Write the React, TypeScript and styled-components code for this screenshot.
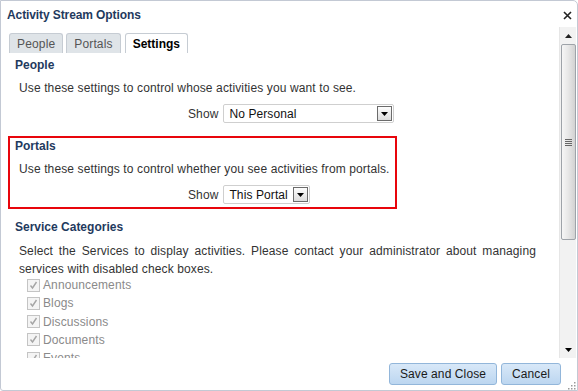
import React from "react";
import styled, { createGlobalStyle } from "styled-components";

const Global = createGlobalStyle`
  html, body { margin: 0; padding: 0; background: #ffffff; }
  body { font-family: "Liberation Sans", Arial, sans-serif; font-size: 12px; color: #333; }
  * { box-sizing: border-box; }
`;

const Dialog = styled.div`
  width: 578px;
  height: 391px;
  border: 1px solid #c3c9d4;
  border-top-right-radius: 5px;
  border-bottom-left-radius: 3px;
  background: #fff;
  display: flex;
  flex-direction: column;
  overflow: hidden;
`;

const Header = styled.div`
  height: 26px;
  display: flex;
  align-items: flex-start;
  justify-content: space-between;
  padding: 7px 5px 0 6px;
`;

const Title = styled.div`
  font-weight: bold;
  font-size: 12px;
  line-height: 15px;
  color: #1f3a5e;
  letter-spacing: -0.1px;
`;

const CloseBtn = styled.div`
  width: 10px;
  height: 10px;
  margin-top: 2px;
  display: flex;
  align-items: center;
  justify-content: center;
`;

const Body = styled.div`
  height: 331px;
  display: flex;
`;

const Viewport = styled.div`
  flex: 1;
  overflow: hidden;
  padding: 6px 0 0 7px;
`;

const Tabs = styled.div`
  display: flex;
  gap: 3px;
  padding-left: 1px;
  height: 20px;
`;

const Tab = styled.div<{ $active?: boolean }>`
  height: 20px;
  padding: 0 7px;
  display: flex;
  align-items: center;
  font-size: 12px;
  letter-spacing: ${(p) => (p.$active ? "0" : "0.15px")};
  border: 1px solid #c6ccd3;
  border-bottom: none;
  border-radius: 3px 3px 0 0;
  background: ${(p) => (p.$active ? "#ffffff" : "#dfe4e8")};
  color: ${(p) => (p.$active ? "#000" : "#555")};
  font-weight: ${(p) => (p.$active ? "bold" : "normal")};
  margin-left: ${(p) => (p.$active ? "1px" : "0")};
`;

const Sections = styled.div`
  display: flex;
  flex-direction: column;
  align-items: flex-start;
  padding-top: 2px;
`;

const Section = styled.div<{ $highlight?: boolean }>`
  border: 2px solid ${(p) => (p.$highlight ? "#e8050c" : "transparent")};
  padding: 1px 5px 3px 5px;
  margin-bottom: 8px;
  display: flex;
  flex-direction: column;
`;

const Heading = styled.div`
  font-weight: bold;
  font-size: 12px;
  line-height: 15px;
  color: #1f3a5e;
`;

const Desc = styled.div<{ $mt?: number; $lh?: number; $w?: number }>`
  margin-top: ${(p) => p.$mt ?? 8}px;
  padding-left: 4px;
  line-height: ${(p) => p.$lh ?? 15}px;
  color: #333;
  letter-spacing: 0.12px;
  white-space: ${(p) => (p.$w ? "normal" : "nowrap")};
  width: ${(p) => (p.$w ? `${p.$w}px` : "auto")};
  text-align: ${(p) => (p.$w ? "justify" : "left")};
`;

const ShowRow = styled.div`
  margin-top: 8px;
  height: 19px;
  display: flex;
  align-items: center;
  padding-left: 173px;
  gap: 5px;
  color: #333;
  letter-spacing: 0.1px;
`;

const Select = styled.div<{ $w: number }>`
  width: ${(p) => p.$w}px;
  height: 19px;
  border: 1px solid #cfcfcf;
  border-radius: 2px;
  display: flex;
  align-items: center;
  justify-content: space-between;
  padding: 0 1px 0 5px;
  color: #111;
  background: #fff;
`;

const ArrowBox = styled.div`
  width: 15px;
  height: 15px;
  border: 1px solid #6b6b6b;
  background: linear-gradient(#fdfdfd, #dcdcdc);
  display: flex;
  align-items: center;
  justify-content: center;
`;

const CheckList = styled.div`
  display: flex;
  flex-direction: column;
  padding-left: 12px;
  margin-top: -2px;
`;

const CheckRow = styled.div`
  height: 18.25px;
  display: flex;
  align-items: center;
  gap: 3px;
  color: #8a8a8a;
  font-size: 12px;
  letter-spacing: 0.12px;
`;

const CheckBox = styled.div`
  width: 13px;
  height: 13px;
  border: 1px solid #c4c4c4;
  background: #f4f4f4;
  display: flex;
  align-items: center;
  justify-content: center;
`;

const Scrollbar = styled.div`
  width: 17px;
  margin-right: 1px;
  background: #f2f2f2;
  border-left: 1px solid #e6e6e6;
  display: flex;
  flex-direction: column;
  align-items: center;
`;

const ScrollArrow = styled.div`
  height: 17px;
  width: 100%;
  display: flex;
  align-items: center;
  justify-content: center;
`;

const Thumb = styled.div`
  width: 15px;
  height: 196px;
  border: 1px solid #9ea3a9;
  border-radius: 2px;
  background: linear-gradient(90deg, #f6f6f6 0%, #e8e8e8 45%, #d2d2d2 100%);
  display: flex;
  align-items: center;
  justify-content: center;
`;

const Track = styled.div`
  flex: 1;
`;

const Footer = styled.div`
  flex: 1;
  display: flex;
  justify-content: flex-end;
  align-items: flex-start;
  padding: 5px 16px 0 0;
  gap: 4px;
  position: relative;
`;

const Button = styled.div`
  height: 22px;
  padding: 0 10px;
  display: flex;
  align-items: center;
  border: 1px solid #92b6da;
  border-radius: 3px;
  background: linear-gradient(#d8e8f8, #bcd6f0);
  color: #1a1a1a;
  font-size: 12px;
  letter-spacing: 0.1px;
`;

const Grip = styled.div`
  position: absolute;
  right: 1px;
  bottom: 1px;
  width: 10px;
  height: 10px;
`;

const Arrow = () => (
  <svg width="7" height="4" viewBox="0 0 7 4">
    <path d="M0 0h7L3.5 4z" fill="#000" />
  </svg>
);

const Check = () => (
  <svg width="9" height="9" viewBox="0 0 9 9">
    <path d="M1.5 4.5 L3.5 7 L7.5 1" stroke="#a5a5a5" strokeWidth="1.4" fill="none" />
  </svg>
);

const services = ["Announcements", "Blogs", "Discussions", "Documents", "Events", "Lists"];

export default function App() {
  return (
    <>
      <Global />
      <Dialog>
        <Header>
          <Title>Activity Stream Options</Title>
          <CloseBtn>
            <svg width="9" height="9" viewBox="0 0 9 9">
              <path d="M1 1L8 8M8 1L1 8" stroke="#222" strokeWidth="1.6" />
            </svg>
          </CloseBtn>
        </Header>
        <Body>
          <Viewport>
            <Tabs>
              <Tab>People</Tab>
              <Tab>Portals</Tab>
              <Tab $active>Settings</Tab>
            </Tabs>
            <Sections>
              <Section>
                <Heading>People</Heading>
                <Desc>Use these settings to control whose activities you want to see.</Desc>
                <ShowRow>
                  Show
                  <Select $w={171}>
                    No Personal
                    <ArrowBox><Arrow /></ArrowBox>
                  </Select>
                </ShowRow>
              </Section>
              <Section $highlight>
                <Heading>Portals</Heading>
                <Desc>Use these settings to control whether you see activities from portals.</Desc>
                <ShowRow>
                  Show
                  <Select $w={87}>
                    This Portal
                    <ArrowBox><Arrow /></ArrowBox>
                  </Select>
                </ShowRow>
              </Section>
              <Section>
                <Heading>Service Categories</Heading>
                <Desc $mt={7} $lh={18} $w={521}>
                  Select the Services to display activities. Please contact your administrator about managing services with disabled check boxes.
                </Desc>
                <CheckList>
                  {services.map((s) => (
                    <CheckRow key={s}>
                      <CheckBox><Check /></CheckBox>
                      {s}
                    </CheckRow>
                  ))}
                </CheckList>
              </Section>
            </Sections>
          </Viewport>
          <Scrollbar>
            <ScrollArrow>
              <svg width="7" height="4" viewBox="0 0 7 4"><path d="M0 4h7L3.5 0z" fill="#222" /></svg>
            </ScrollArrow>
            <Thumb>
              <svg width="7" height="7" viewBox="0 0 7 7">
                <path d="M0 0.5h7M0 2.5h7M0 4.5h7M0 6.5h7" stroke="#666" strokeWidth="1" />
              </svg>
            </Thumb>
            <Track />
            <ScrollArrow>
              <Arrow />
            </ScrollArrow>
          </Scrollbar>
        </Body>
        <Footer>
          <Button>Save and Close</Button>
          <Button>Cancel</Button>
          <Grip>
            <svg width="10" height="10" viewBox="0 0 10 10">
              {[[8, 2], [8, 5], [5, 5], [8, 8], [5, 8], [2, 8]].map(([x, y], i) => (
                <rect key={i} x={x} y={y} width="1.5" height="1.5" fill="#9a9a9a" />
              ))}
            </svg>
          </Grip>
        </Footer>
      </Dialog>
    </>
  );
}
